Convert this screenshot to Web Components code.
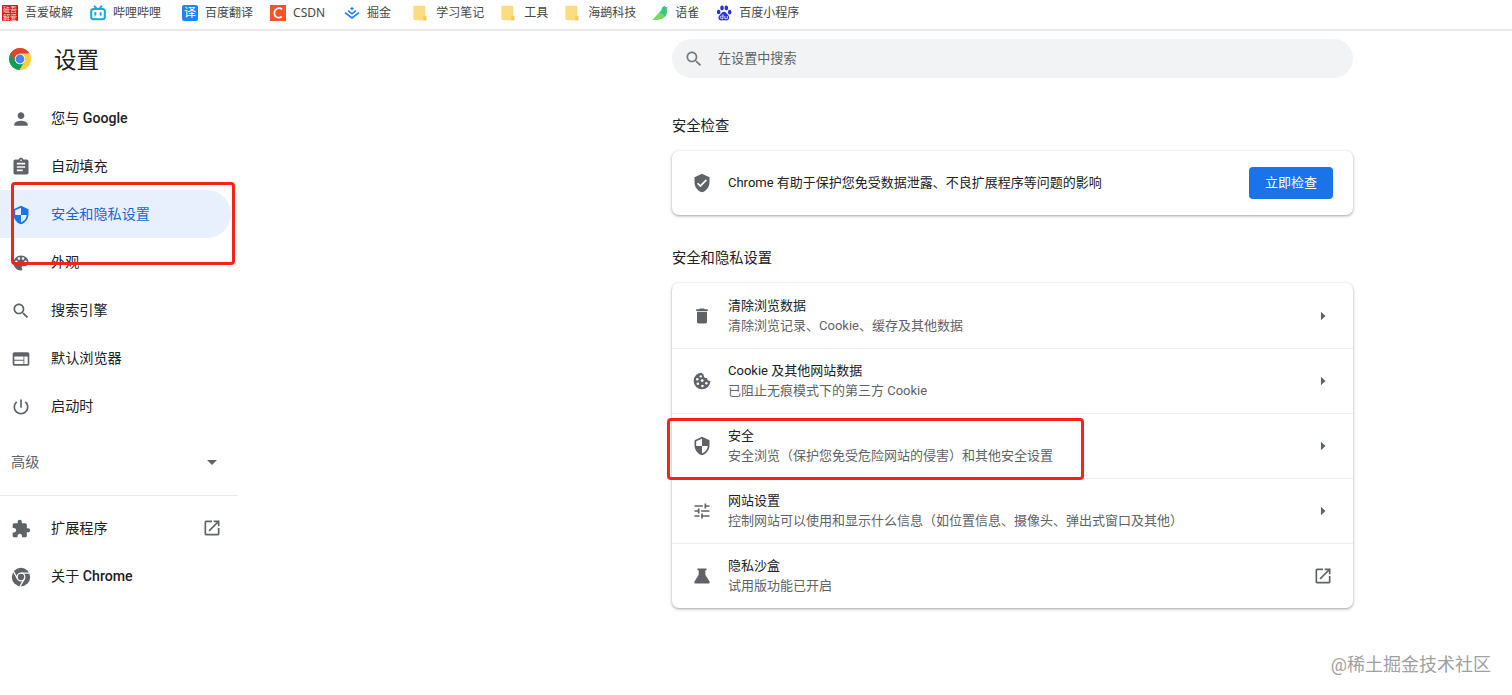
<!DOCTYPE html>
<html lang="zh-CN">
<head>
<meta charset="utf-8">
<title>设置</title>
<style>
    body {
        margin: 0;
        height: 695px;
        overflow: hidden;
        position: relative;
        background: #fff;
        color: #202124;
        font: 13px/20px Roboto, "Noto Sans CJK SC", sans-serif;
    }
    b { font-weight: 500; }
</style>
</head>
<body>
<bookmark-bar>
    <bookmark-item icon="pojie">吾爱破解</bookmark-item>
    <bookmark-item icon="bili" wide>哔哩哔哩</bookmark-item>
    <bookmark-item icon="fanyi">百度翻译</bookmark-item>
    <bookmark-item icon="csdn" style="margin-right:19px">CSDN</bookmark-item>
    <bookmark-item icon="juejin" wide>掘金</bookmark-item>
    <bookmark-item icon="folder">学习笔记</bookmark-item>
    <bookmark-item icon="folder">工具</bookmark-item>
    <bookmark-item icon="folder">海鹚科技</bookmark-item>
    <bookmark-item icon="yuque">语雀</bookmark-item>
    <bookmark-item icon="baidu">百度小程序</bookmark-item>
</bookmark-bar>
<settings-page>
    <settings-menu slot="side" heading="设置">
        <menu-item icon="person">您与 <b>Google</b></menu-item>
        <menu-item icon="assignment">自动填充</menu-item>
        <menu-item icon="security" selected>安全和隐私设置</menu-item>
        <menu-item icon="palette">外观</menu-item>
        <menu-item icon="search">搜索引擎</menu-item>
        <menu-item icon="web">默认浏览器</menu-item>
        <menu-item icon="power">启动时</menu-item>
        <menu-item slot="more" end="dropdown" plain>高级</menu-item>
        <menu-item slot="extra" icon="extension" end="open">扩展程序</menu-item>
        <menu-item slot="extra" icon="chrome">关于 <b>Chrome</b></menu-item>
    </settings-menu>
    <search-box>在设置中搜索</search-box>
    <settings-section heading="安全检查">
        <settings-row icon="verified">Chrome 有助于保护您免受数据泄露、不良扩展程序等问题的影响
            <action-button slot="end">立即检查</action-button>
        </settings-row>
    </settings-section>
    <settings-section heading="安全和隐私设置">
        <settings-row icon="delete" end="arrow" sub="清除浏览记录、Cookie、缓存及其他数据">清除浏览数据</settings-row>
        <settings-row icon="cookie" end="arrow" sub="已阻止无痕模式下的第三方 Cookie">Cookie 及其他网站数据</settings-row>
        <settings-row icon="security" end="arrow" sub="安全浏览（保护您免受危险网站的侵害）和其他安全设置">安全</settings-row>
        <settings-row icon="tune" end="arrow" sub="控制网站可以使用和显示什么信息（如位置信息、摄像头、弹出式窗口及其他）">网站设置</settings-row>
        <settings-row icon="flask" end="open" sub="试用版功能已开启">隐私沙盒</settings-row>
    </settings-section>
</settings-page>
<mark-frame style="left:11px;top:182px;width:224px;height:83px"></mark-frame>
<mark-frame style="left:667px;top:418px;width:417px;height:62px"></mark-frame>
<water-mark>@稀土掘金技术社区</water-mark>

<script>
    const icons = {
        person: '<path d="M12 12c2.21 0 4-1.79 4-4s-1.79-4-4-4-4 1.79-4 4 1.79 4 4 4zm0 2c-2.67 0-8 1.34-8 4v2h16v-2c0-2.66-5.33-4-8-4z"/>',
        assignment: '<path d="M19 3h-4.18C14.4 1.84 13.3 1 12 1c-1.3 0-2.4.84-2.82 2H5c-1.1 0-2 .9-2 2v14c0 1.1.9 2 2 2h14c1.1 0 2-.9 2-2V5c0-1.1-.9-2-2-2zm-7 0c.55 0 1 .45 1 1s-.45 1-1 1-1-.45-1-1 .45-1 1-1zm2 14H7v-2h7v2zm3-4H7v-2h10v2zm0-4H7V7h10v2z"/>',
        security: '<path d="M12 1L3 5v6c0 5.55 3.84 10.74 9 12 5.16-1.26 9-6.45 9-12V5l-9-4zm0 10.99h7c-.53 4.12-3.28 7.79-7 8.94V12H5V6.3l7-3.11v8.8z"/>',
        palette: '<path d="M12 3c-4.97 0-9 4.03-9 9s4.03 9 9 9c.83 0 1.5-.67 1.5-1.5 0-.39-.15-.74-.39-1.01-.23-.26-.38-.61-.38-.99 0-.83.67-1.5 1.5-1.5H16c2.76 0 5-2.24 5-5 0-4.42-4.03-8-9-8zm-5.5 9c-.83 0-1.5-.67-1.5-1.5S5.67 9 6.5 9 8 9.67 8 10.5 7.33 12 6.5 12zm3-4C8.67 8 8 7.33 8 6.5S8.67 5 9.5 5s1.5.67 1.5 1.5S10.33 8 9.5 8zm5 0c-.83 0-1.5-.67-1.5-1.5S13.67 5 14.5 5s1.5.67 1.5 1.5S15.33 8 14.5 8zm3 4c-.83 0-1.5-.67-1.5-1.5S16.67 9 17.5 9s1.5.67 1.5 1.5-.67 1.5-1.5 1.5z"/>',
        search: '<path d="M15.5 14h-.79l-.28-.27C15.41 12.59 16 11.11 16 9.5 16 5.91 13.09 3 9.5 3S3 5.91 3 9.5 5.91 16 9.5 16c1.61 0 3.09-.59 4.23-1.57l.27.28v.79l5 4.99L20.49 19l-4.99-5zm-6 0C7.01 14 5 11.99 5 9.5S7.01 5 9.5 5 14 7.01 14 9.5 11.99 14 9.5 14z"/>',
        web: '<path d="M20 4H4c-1.1 0-1.99.9-1.99 2L2 18c0 1.1.9 2 2 2h16c1.1 0 2-.9 2-2V6c0-1.1-.9-2-2-2zm-5 14H4v-4h11v4zm0-5H4V9h11v4zm5 5h-4V9h4v9z"/>',
        power: '<path d="M13 3h-2v10h2V3zm4.83 2.17l-1.42 1.42C17.99 7.86 19 9.81 19 12c0 3.87-3.13 7-7 7s-7-3.13-7-7c0-2.19 1.01-4.14 2.58-5.42L6.17 5.17C4.23 6.82 3 9.26 3 12c0 4.97 4.03 9 9 9s9-4.03 9-9c0-2.74-1.23-5.18-3.17-6.83z"/>',
        extension: '<path d="M20.5 11H19V7c0-1.1-.9-2-2-2h-4V3.5C13 2.12 11.88 1 10.5 1S8 2.12 8 3.5V5H4c-1.1 0-1.99.9-1.99 2v3.8H3.5c1.49 0 2.7 1.21 2.7 2.7s-1.21 2.7-2.7 2.7H2V20c0 1.1.9 2 2 2h3.8v-1.5c0-1.49 1.21-2.7 2.7-2.7 1.49 0 2.7 1.21 2.7 2.7V22H17c1.1 0 2-.9 2-2v-4h1.5c1.38 0 2.5-1.12 2.5-2.5S21.88 11 20.5 11z"/>',
        chrome: '<circle cx="12" cy="12" r="11"/><g fill="none" stroke="#fff" stroke-width="1.5"><circle cx="12" cy="12" r="4.6"/><path d="M12 7.4h10M8 14.3 3 5.6M16 14.3l-5 8.7"/></g>',
        open: '<path d="M19 19H5V5h7V3H5c-1.11 0-2 .9-2 2v14c0 1.1.89 2 2 2h14c1.1 0 2-.9 2-2v-7h-2v7zM14 3v2h3.59l-9.83 9.83 1.41 1.41L19 6.41V10h2V3h-7z"/>',
        dropdown: '<path d="M6 9.5l6 6 6-6z"/>',
        arrow: '<path d="M9.5 7l5.500 5-5.500 5z"/>',
        verified: '<path d="M12 1L3 5v6c0 5.55 3.84 10.74 9 12 5.16-1.26 9-6.45 9-12V5l-9-4zm-2 16l-4-4 1.41-1.41L10 14.17l6.59-6.59L18 9l-8 8z"/>',
        delete: '<path d="M6 19c0 1.1.9 2 2 2h8c1.1 0 2-.9 2-2V7H6v12zM19 4h-3.5l-1-1h-5l-1 1H5v2h14V4z"/>',
        cookie: '<path d="M12 2a10 10 0 1 0 10 10 3.4 3.4 0 0 1-4-3.6 3.5 3.5 0 0 1-4-4.2A3 3 0 0 1 12 2z"/><g fill="#fff"><circle cx="10.5" cy="6.4" r="1.4"/><circle cx="6.3" cy="9.8" r="1.5"/><circle cx="12.2" cy="11.5" r="1.7"/><circle cx="7" cy="15.3" r="1.5"/><circle cx="12.5" cy="18" r="1.5"/><circle cx="17.2" cy="14.8" r="1.5"/></g>',
        tune: '<path d="M3 17v2h6v-2H3zM3 5v2h10V5H3zm10 16v-2h8v-2h-8v-2h-2v6h2zM7 9v2H3v2h4v2h2V9H7zm14 4v-2H11v2h10zm-6-4h2V7h4V5h-4V3h-2v6z"/>',
        flask: '<path d="M6.5 3h11v2H16v5.5l5 8c.7 1.2 0 2.5-1.4 2.5H4.4c-1.4 0-2.100-1.300-1.400-2.500l5-8V5H6.500z"/>',
        logo: '<circle cx="12" cy="12" r="11" fill="#ffcd40"/><path d="M2.470 6.500A11 11 0 0 0 11.500 23l4.800-8.500L7.700 14.500l4.300-2.500V6.500z" fill="#0f9d58"/><path d="M2.470 6.500A11 11 0 0 1 21.530 6.500H12L7.200 9.300 6.700 13.500z" fill="#db4437"/><circle cx="12" cy="12" r="5.200" fill="#fff"/><circle cx="12" cy="12" r="4.400" fill="#4285f4"/>',
        pojie: '<rect width="24" height="24" rx="1" fill="#d8191f"/><text x="12" y="11" fill="#ffd9d0" font-size="10.5" text-anchor="middle">破吾</text><text x="12" y="22" fill="#ffd9d0" font-size="10.5" text-anchor="middle">解爱</text>',
        bili: '<g fill="none" stroke="#17a9d5" stroke-width="3" stroke-linecap="round"><rect x="1.8" y="6" width="20.4" height="15.5" rx="3.5"/><path d="M7 2l3 3.5M17 2l-3 3.500M8 12v2.500M16 12v2.500"/></g>',
        fanyi: '<rect width="24" height="24" rx="3" fill="#2483ee"/><text x="12" y="18.5" fill="#fff" font-size="18" text-anchor="middle">译</text>',
        csdn: '<rect width="24" height="24" fill="#f5532d"/><path d="M18.300 6.500C13 2.500 6.500 6 6.500 12.500c0 6 6.500 8 11.300 4.800" fill="none" stroke="#fff" stroke-width="2.600"/>',
        juejin: '<g fill="none" stroke="#1e80ff" stroke-width="2.5"><path d="M1.500 11.500 12 19.500l10.500-8M6 8.500l6 4.700 6-4.700"/></g><path d="M12 3l3 2.400-3 2.400-3-2.400z" fill="#1e80ff"/>',
        folder: '<path d="M3.500 1h15q1.500 0 1.500 1.500V16l1.500 1v6H5q-3 0-3-3V2.500Q2 1 3.500 1z" fill="#fcdc82"/><path d="M17 23v-5.500l3-1.500 1.500 1v6z" fill="#f3c95a"/>',
        yuque: '<path d="M1 22.500 14 8c.5-4 2-6 5-7 .5 2 2 2.500 4.500 2.500-1 1.500-1.500 3-1.200 5.500C23 16 18.500 22.500 1 22.500z" fill="#31cc79"/><path d="M1 22.500 11 11.500c4.500 1 8 3 7.500 6.500-3 3-8 4.500-17.500 4.500z" fill="#78d95a"/>',
        baidu: '<g fill="#2932df"><ellipse cx="4" cy="10.500" rx="2.700" ry="3.500"/><ellipse cx="9" cy="4.500" rx="2.700" ry="3.700"/><ellipse cx="15.500" cy="4.500" rx="2.700" ry="3.700"/><ellipse cx="20.500" cy="10.800" rx="2.600" ry="3.500"/><path d="M12.300 10c2.500 0 3.500 2.500 5.200 4.200 4 3.800 2.200 9-2 9-2 0-4.500-.6-7 0-5 .5-6.500-5-2.500-8.500C8.300 12.600 9 10 12.300 10z"/></g><path d="M10.500 14v6.500H8.300a1.700 1.700 0 0 1 0-3.800h2.200M13.300 16.500v4H17v-4" fill="none" stroke="#fff" stroke-width="1.200"/>'
    };

    const icon = name => icons[name] ? `<svg class="icon" viewBox="0 0 24 24">${icons[name]}</svg>` : '';

    class BaseElement extends HTMLElement {
        constructor() {
            super();
            this.attachShadow({ mode: 'open' }).innerHTML = this.render();
        }

        attr( name ) {
            return this.getAttribute( name ) || '';
        }
    }

    class BookmarkBar extends BaseElement {
        render() {
            return `
                <style>
                    :host {
                        display: flex;
                        box-sizing: border-box;
                        height: 31px;
                        padding: 0 0 4px 2px;
                        border-bottom: 2px solid #e9ebea;
                        font: 12px/25px "Noto Sans", "Noto Sans CJK SC", sans-serif;
                        color: #45474a;
                    }
                </style>
                <slot></slot>
            `;
        }
    }

    class BookmarkItem extends BaseElement {
        render() {
            return `
                <style>
                    :host {
                        display: flex;
                        align-items: center;
                        gap: 7px;
                        margin-right: 17px;
                        white-space: nowrap;
                    }
                    :host([wide]) { margin-right: 21px; }
                    :host([icon="folder"]) { gap: 8px; margin-right: 16px; }
                    .icon { width: 16px; height: 16px; overflow: visible; }
                </style>
                ${icon( this.attr('icon') )}
                <span><slot></slot></span>
            `;
        }
    }

    class SettingsPage extends BaseElement {
        render() {
            return `
                <style>
                    :host {
                        display: grid;
                        grid-template-columns: 672px 681px;
                    }
                    main { padding-top: 8px; }
                </style>
                <slot name="side"></slot>
                <main><slot></slot></main>
            `;
        }
    }

    class SettingsMenu extends BaseElement {
        render() {
            return `
                <style>
                    :host { display: block; width: 238px; }
                    header {
                        display: flex;
                        align-items: center;
                        gap: 22px;
                        height: 55px;
                        padding: 0 0 8px 8px;
                        font-size: 22.5px;
                    }
                    header .icon { width: 24px; height: 24px; }
                    header span { padding-top: 3px; }
                    .more { padding-top: 8px; }
                    hr {
                        height: 1px;
                        margin: 9px 0 8px;
                        border: 0;
                        background: #e8eaed;
                    }
                </style>
                <header>${icon('logo')}<span>${this.attr('heading')}</span></header>
                <slot></slot>
                <div class="more"><slot name="more"></slot></div>
                <hr>
                <slot name="extra"></slot>
            `;
        }
    }

    class MenuItem extends BaseElement {
        render() {
            return `
                <style>
                    :host {
                        display: flex;
                        align-items: center;
                        box-sizing: border-box;
                        width: 231px;
                        height: 48px;
                        padding: 0 9px 0 11px;
                        border-radius: 0 24px 24px 0;
                        font-size: 14.15px;
                    }
                    :host([selected]) { background: #e8f0fe; color: #1967d2; }
                    :host([plain]) { color: #5f6368; }
                    .icon {
                        flex: none;
                        width: 20px;
                        height: 20px;
                        fill: #5f6368;
                    }
                    .start { display: flex; padding-top: 1px; }
                    .start .icon { margin-right: 20px; }
                    :host([selected]) .icon { fill: #1a73e8; }
                    .label { flex: 1; }
                    .end { display: flex; }
                </style>
                <span class="start">${icon( this.attr('icon') )}</span>
                <span class="label"><slot></slot></span>
                <span class="end">${icon( this.attr('end') )}</span>
            `;
        }
    }

    class SearchBox extends BaseElement {
        render() {
            return `
                <style>
                    :host {
                        display: flex;
                        align-items: center;
                        gap: 14px;
                        height: 39px;
                        margin-bottom: 5px;
                        padding-left: 12px;
                        border-radius: 20px;
                        background: #f1f3f4;
                        color: #5f6368;
                        font-size: 13.1px;
                    }
                    .icon { width: 20px; height: 20px; fill: #757a7f; }
                </style>
                ${icon('search')}
                <slot></slot>
            `;
        }
    }

    class SettingsSection extends BaseElement {
        render() {
            return `
                <style>
                    :host { display: block; padding-top: 33px; }
                    h2 {
                        margin: 0 0 15px;
                        font-size: 14.3px;
                        font-weight: 400;
                        line-height: 20px;
                    }
                    .card {
                        border-radius: 7px;
                        box-shadow: 0 1px 2px rgba(60, 64, 67, .3), 0 1px 3px 1px rgba(60, 64, 67, .15);
                    }
                </style>
                <h2>${this.attr('heading')}</h2>
                <div class="card"><slot></slot></div>
            `;
        }
    }

    class SettingsRow extends BaseElement {
        render() {
            const sub = this.attr('sub');
            return `
                <style>
                    :host {
                        display: flex;
                        align-items: center;
                        box-sizing: border-box;
                        height: 65px;
                        padding: 0 20px;
                        border-top: 1px solid #eceded;
                    }
                    :host(:first-child) { border-top-color: transparent; }
                    :host(:only-child) { height: 64px; border-top: 0; }
                    .icon { width: 20px; height: 20px; fill: #5f6368; }
                    .text { flex: 1; margin-left: 16px; }
                    .sub { color: #5f6368; }
                    .end { display: flex; }
                </style>
                ${icon( this.attr('icon') )}
                <div class="text">
                    <div><slot></slot></div>
                    ${sub && `<div class="sub">${sub}</div>`}
                </div>
                <div class="end">${icon( this.attr('end') )}<slot name="end"></slot></div>
            `;
        }
    }

    class ActionButton extends BaseElement {
        render() {
            return `
                <style>
                    :host { display: block; }
                    button {
                        display: block;
                        width: 84px;
                        height: 32px;
                        padding: 0;
                        border: 0;
                        border-radius: 4px;
                        background: #1a73e8;
                        color: #fff;
                        font: inherit;
                    }
                </style>
                <button><slot></slot></button>
            `;
        }
    }

    // red rectangle laid over the page
    class MarkFrame extends BaseElement {
        render() {
            return `
                <style>
                    :host {
                        position: absolute;
                        box-sizing: border-box;
                        border: 3px solid #f5241b;
                        border-radius: 4px;
                    }
                </style>
            `;
        }
    }

    class WaterMark extends BaseElement {
        render() {
            return `
                <style>
                    :host {
                        position: absolute;
                        right: 21px;
                        bottom: 17px;
                        color: #a0a0a0;
                        font-size: 18px;
                        line-height: 26px;
                        white-space: nowrap;
                    }
                </style>
                <slot></slot>
            `;
        }
    }

    customElements.define("bookmark-bar", BookmarkBar );
    customElements.define("bookmark-item", BookmarkItem );
    customElements.define("settings-page", SettingsPage );
    customElements.define("settings-menu", SettingsMenu );
    customElements.define("menu-item", MenuItem );
    customElements.define("search-box", SearchBox );
    customElements.define("settings-section", SettingsSection );
    customElements.define("settings-row", SettingsRow );
    customElements.define("action-button", ActionButton );
    customElements.define("mark-frame", MarkFrame );
    customElements.define("water-mark", WaterMark );
</script>
</body>
</html>
